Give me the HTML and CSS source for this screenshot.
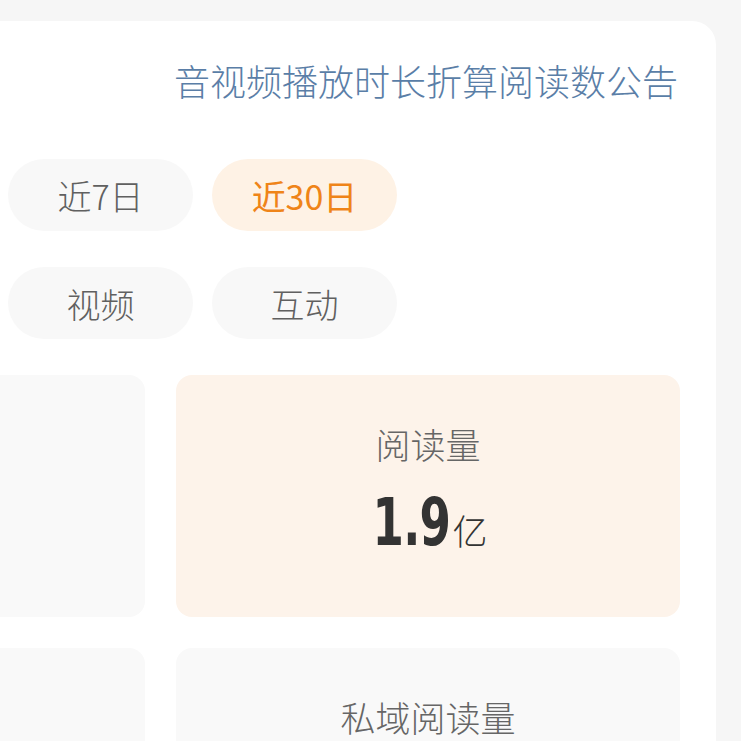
FILE: index.html
```html
<!DOCTYPE html>
<html lang="zh-CN">

<head>
    <meta charset="UTF-8">
    <meta name="viewport" content="width=device-width, initial-scale=1.0">
    <title>数据概览</title>
    <link rel="stylesheet" href="styles.css">
</head>

<body>
    <div class="panel">
        <div class="notice-row">
            <a class="notice" href="#">音视频播放时长折算阅读数公告</a>
        </div>

        <div class="pill-row">
            <button class="pill">昨日</button>
            <button class="pill">近7日</button>
            <button class="pill active">近30日</button>
        </div>
        <div class="pill-row">
            <button class="pill">全部</button>
            <button class="pill">视频</button>
            <button class="pill">互动</button>
        </div>

        <div class="stat-grid">
            <div class="stat-card">
                <div class="stat-label">播放量</div>
                <div class="stat-value"><span class="num">2.3</span><span class="unit">亿</span></div>
            </div>
            <div class="stat-card active">
                <div class="stat-label">阅读量</div>
                <div class="stat-value"><span class="num">1.9</span><span class="unit">亿</span></div>
            </div>
            <div class="stat-card">
                <div class="stat-label">公域阅读量</div>
                <div class="stat-value"><span class="num">1.2</span><span class="unit">亿</span></div>
            </div>
            <div class="stat-card">
                <div class="stat-label">私域阅读量</div>
                <div class="stat-value"><span class="num">6842</span><span class="unit">万</span></div>
            </div>
        </div>
    </div>
</body>

</html>
```

FILE: styles.css
```css
* {
    margin: 0;
    padding: 0;
    box-sizing: border-box;
}

body {
    font-family: "Noto Sans CJK SC", "Noto Sans", sans-serif;
    background-color: #f6f6f6;
    overflow: hidden;
    padding-top: 21px;
}

/* the panel runs off the left edge of the screen */
.panel {
    width: 1111px;
    margin-left: -395px;
    background-color: #fff;
    border-radius: 24px;
    padding: 35px 36px 40px 36px;
}

.notice-row {
    display: flex;
    justify-content: flex-end;
    padding-right: 2px;
}

.notice {
    color: #5a7ea7;
    font-size: 36px;
    font-weight: 300;
    line-height: 48px;
    text-decoration: none;
}

.pill-row {
    display: flex;
    gap: 19px;
    padding-left: 163px;
    margin-top: 36px;
}

.notice-row + .pill-row {
    margin-top: 55px;
}

.pill {
    width: 185px;
    height: 72px;
    border: none;
    border-radius: 36px;
    background-color: #f8f8f8;
    color: #606060;
    font-family: "Noto Sans CJK SC", "Noto Sans", sans-serif;
    font-size: 34px;
    font-weight: 300;
    cursor: pointer;
}

.pill.active {
    background-color: #fef2e5;
    color: #ef8418;
    font-weight: 400;
}

.stat-grid {
    display: grid;
    grid-template-columns: 504px 504px;
    grid-auto-rows: 242px;
    column-gap: 31px;
    row-gap: 31px;
    margin-top: 36px;
}

.stat-card {
    background-color: #f9f9f9;
    border-radius: 16px;
    display: flex;
    flex-direction: column;
    align-items: center;
    justify-content: center;
    padding-bottom: 14px;
}

.stat-card.active {
    background-color: #fdf3ea;
}

.stat-label {
    font-size: 35px;
    font-weight: 300;
    line-height: 44px;
    color: #666;
}

.stat-value {
    display: flex;
    align-items: baseline;
    margin-top: 24px;
    color: #333;
}

.stat-value .num {
    display: inline-block;
    font-family: "DejaVu Sans Condensed", "DejaVu Sans", sans-serif;
    font-weight: bold;
    font-size: 66px;
    line-height: 66px;
    letter-spacing: -1px;
    transform: scaleX(0.76);
    transform-origin: right center;
    margin-left: -20px;
}

.stat-value .unit {
    font-size: 35px;
    font-weight: 300;
    margin-left: 2px;
    color: #333;
}
```
